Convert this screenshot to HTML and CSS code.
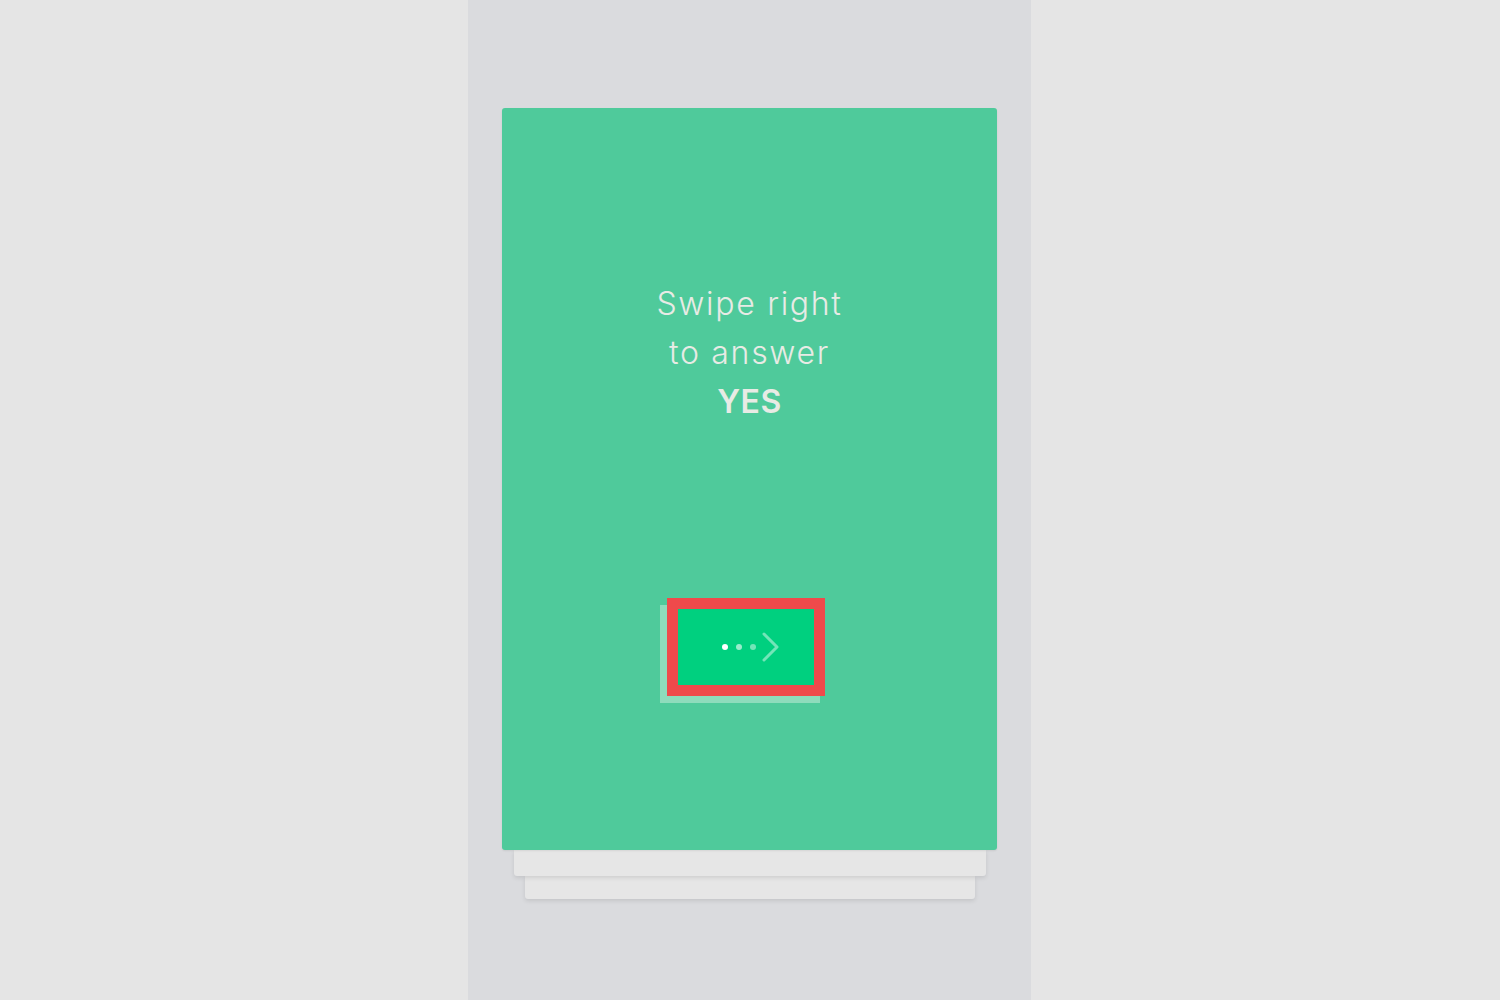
FILE: index.html
```html
<!DOCTYPE html>
<html>
<head>
<meta charset="utf-8">
<link rel="stylesheet" href="styles.css">
</head>
<body>
<div class="page">
  <div class="column">
    <div class="stack">
      <div class="card">
        <div class="prompt">
          <div class="line">Swipe right</div>
          <div class="line">to answer</div>
          <div class="line strong">YES</div>
        </div>
        <div class="btn-wrap">
          <div class="btn-shadow"></div>
          <div class="btn">
            <svg width="64" height="32" viewBox="0 0 64 32">
              <circle cx="8" cy="16" r="3" fill="#ffffff"/>
              <circle cx="22" cy="16" r="3" fill="#ffffff" fill-opacity="0.6"/>
              <circle cx="36" cy="16" r="3" fill="#ffffff" fill-opacity="0.45"/>
              <polyline points="47,3 60,16 47,29" fill="none" stroke="#ffffff" stroke-opacity="0.45" stroke-width="3" stroke-linecap="round" stroke-linejoin="round"/>
            </svg>
          </div>
        </div>
      </div>
      <div class="under under-1"></div>
      <div class="under under-2"></div>
    </div>
  </div>
</div>
</body>
</html>
```
FILE: styles.css
```css
html, body {
  margin: 0;
  padding: 0;
  background: #e5e5e5;
  font-family: "Inter", "Liberation Sans", sans-serif;
}
.page {
  width: 1500px;
  height: 1000px;
  display: flex;
  justify-content: flex-start;
}
.column {
  margin-left: 468px;
  width: 563px;
  height: 1000px;
  background: #dadbde;
  box-sizing: border-box;
  padding: 108px 34px 0 34px;
}
.stack {
  display: flex;
  flex-direction: column;
  align-items: center;
}
.card {
  width: 495px;
  height: 742px;
  background: #4fca9b;
  border-radius: 3px;
  display: flex;
  flex-direction: column;
  align-items: center;
  box-sizing: border-box;
  padding-top: 171px;
  position: relative;
  z-index: 3;
  box-shadow: 0 1px 2px rgba(0,0,0,0.08);
}
.prompt {
  text-align: center;
  color: #e8ebe5;
  font-size: 32px;
  line-height: 49px;
  letter-spacing: 1.7px;
  font-weight: 300;
}
.strong {
  font-weight: 600;
  letter-spacing: 0.5px;
}
.btn-wrap {
  position: relative;
  margin-top: 172px;
  margin-left: -8px;
}
.btn-shadow {
  position: absolute;
  left: -7px;
  top: 7px;
  width: 160px;
  height: 98px;
  background: #8edcbc;
}
.btn {
  position: relative;
  width: 136px;
  height: 76px;
  border: 11px solid #ef4a4b;
  background: #00d07f;
  display: flex;
  align-items: center;
  justify-content: center;
}
.btn svg {
  margin-left: 6px;
}
.under {
  background: #e6e6e6;
  border-radius: 0 0 3px 3px;
  box-shadow: 0 2px 4px rgba(0,0,0,0.10);
}
.under-1 {
  width: 472px;
  height: 26px;
  position: relative;
  z-index: 2;
}
.under-2 {
  width: 450px;
  height: 23px;
  position: relative;
  z-index: 1;
}
```
